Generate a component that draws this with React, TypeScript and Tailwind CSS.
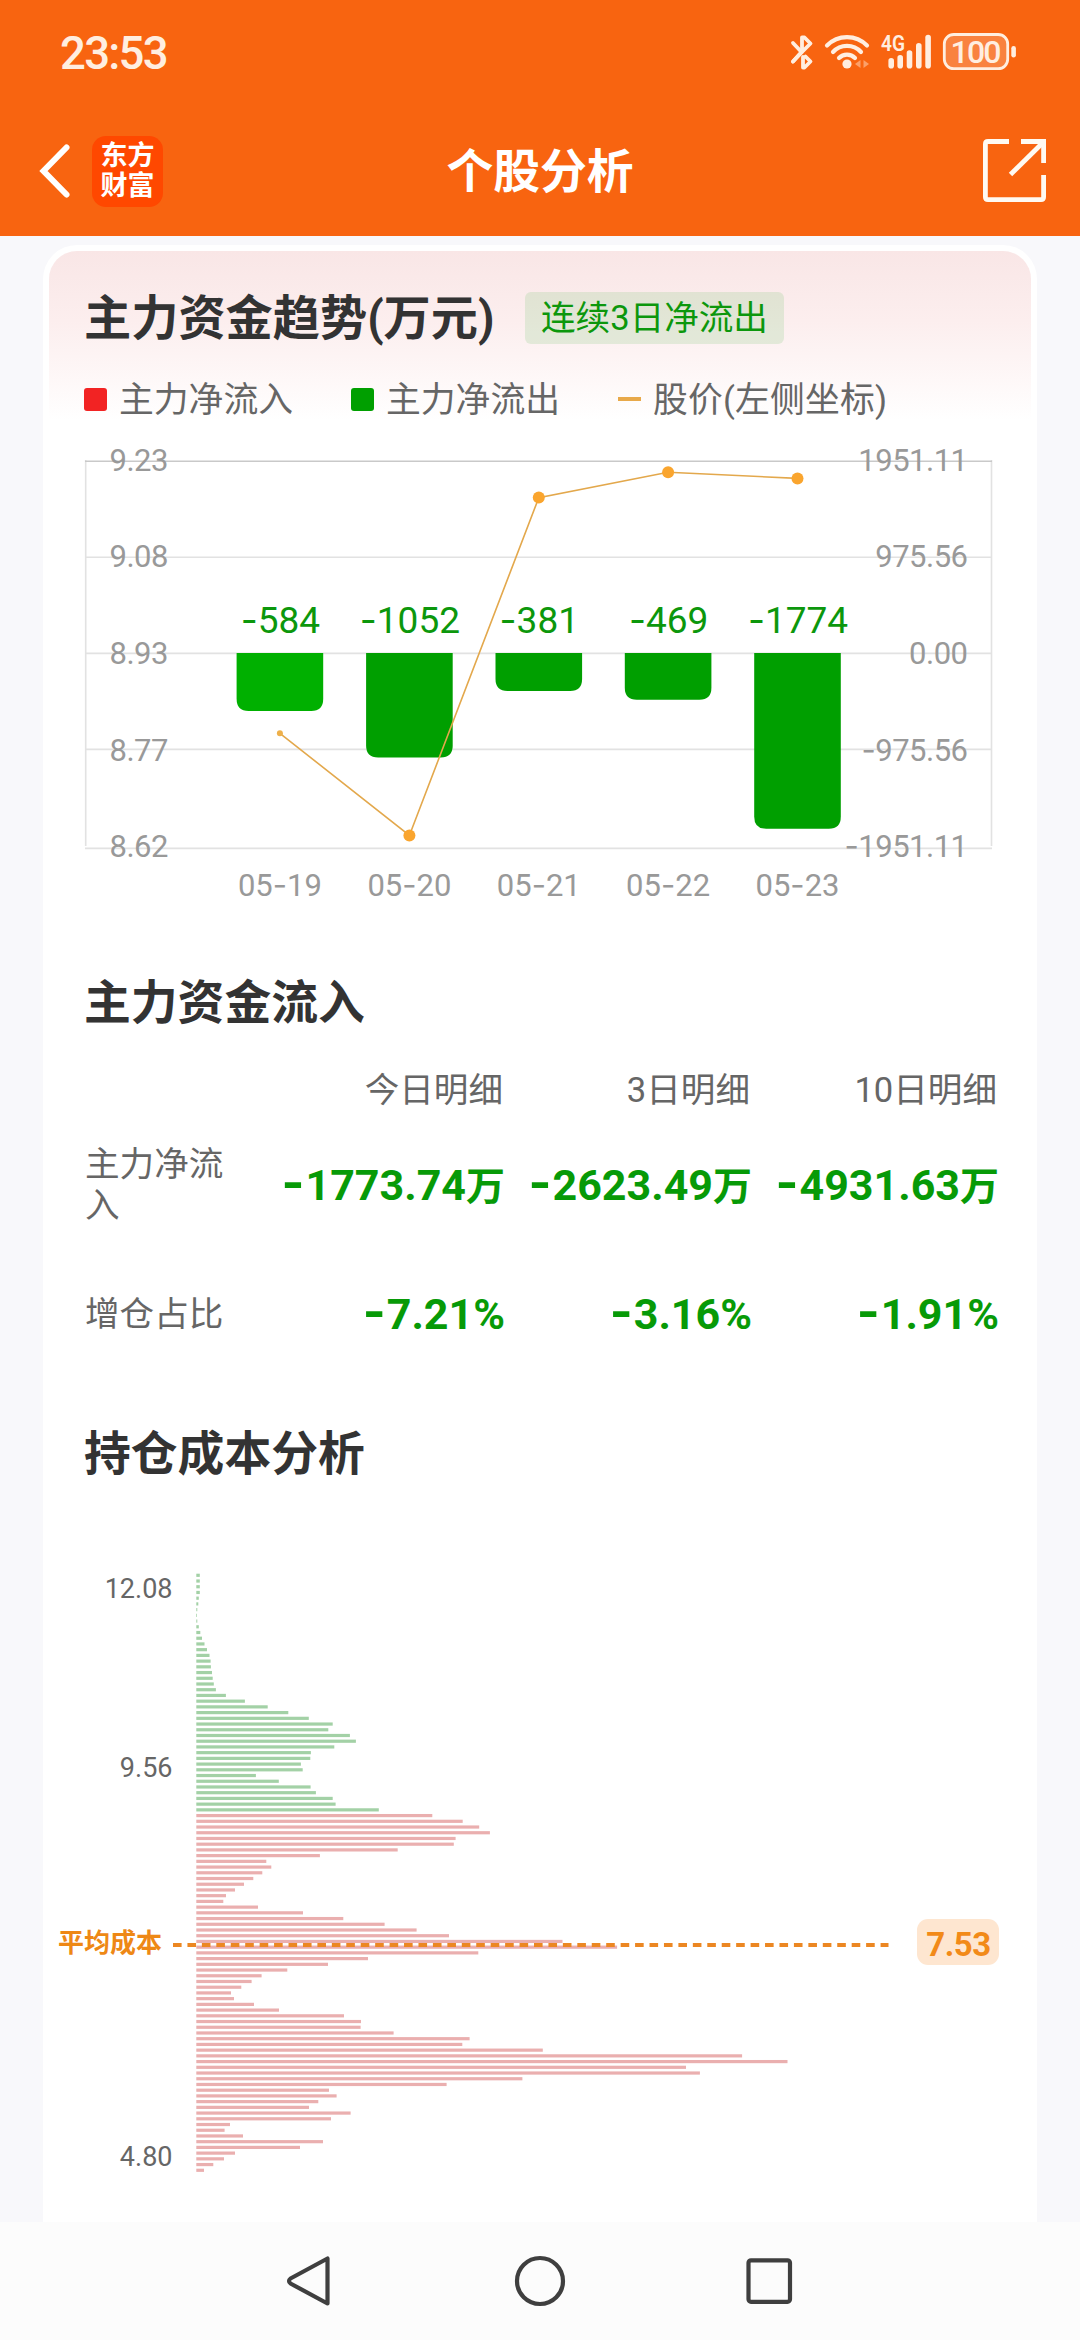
const DAYS = [
    { date: "05-19", value: "584", bottom: 711, x: 279.9, priceY: 733.3 },
    { date: "05-20", value: "1052", bottom: 757.5, x: 409.4, priceY: 835.5 },
    { date: "05-21", value: "381", bottom: 691, x: 538.8, priceY: 497.6 },
    { date: "05-22", value: "469", bottom: 699.8, x: 668.1, priceY: 472.3 },
    { date: "05-23", value: "1774", bottom: 828.7, x: 797.5, priceY: 478.4 },
];

const AXIS = [
    { y: 471, price: "9.23", flow: "1951.11", negative: false },
    { y: 567, price: "9.08", flow: "975.56", negative: false },
    { y: 664, price: "8.93", flow: "0.00", negative: false },
    { y: 761, price: "8.77", flow: "975.56", negative: true },
    { y: 857, price: "8.62", flow: "1951.11", negative: true },
];

// bar lengths from the highest price to the lowest
const COSTS = [
    3.5, 3.5, 3.5, 3.5, 2.5, 2, 1, 0.7, 1, 2.5, 4, 5.7, 8.2, 10.7, 13.2, 14.3, 14.6, 15.7, 16.4, 17.5, 19.6,
    29.6, 48.6, 71.4, 92, 112.5, 136.4, 132, 153.6, 159.6, 138, 114.6, 114, 104.6, 106.4, 59.6, 82.5, 114.3,
    119.6, 136.4, 139.3, 182.5, 236, 266.4, 282.9, 293.6, 259.3, 257.5, 201.4, 123.6, 70, 75, 66, 57, 47.7,
    38.7, 29.7, 27, 61.7, 106.7, 147, 188.3, 220.3, 252.7, 366.2, 420.8, 282, 171.7, 131.7, 91, 65.3, 55.3,
    45, 34.7, 37.7, 57.7, 82.7, 147.7, 164.7, 164.3, 197.3, 273.3, 266, 346.5, 545.8, 591.2, 489.7, 503.6,
    326.1, 250.3, 132.7, 140.3, 122, 112.7, 154.3, 134.7, 33.7, 28.3, 46.7, 126.7, 103.7, 38.7, 27.7, 17, 7.7,
];
const LOSS_COUNT = 42;

const StatusBar = () => {
    return (
        <div className="flex h-[106px] items-center justify-between pl-[60px] pr-[63px] text-[#ffeee0]">
            <span className="pt-0.5 text-[45.5px] font-medium leading-none tracking-[-1.7px]">23:53</span>
            <svg width="230" height="44" viewBox="786 31 230 44" fill="none" stroke="#ffeee0">
                <g strokeWidth="3.8" strokeLinecap="round" strokeLinejoin="round">
                    <path d="M792 43 L800.5 52 L792 61.5" />
                    <path d="M801 52 V37.5 H803.5 L809.5 43.5 L801 52 L792 61.5" />
                    <path d="M802 57 V67.5 H803.5 L809.5 61.5 L804.5 56.5" />
                </g>
                <g strokeWidth="4.2" strokeLinecap="round">
                    <path d="M826 45.5 A28 28 0 0 1 866 45.5" />
                    <path d="M832 52 A19 19 0 0 1 860 52" />
                    <path d="M838 58 A11 11 0 0 1 854 58" />
                </g>
                <circle cx="846" cy="64" r="4.6" fill="#ffeee0" stroke="none" />
                <path d="M859.5 60 V68 L854 64Z M862.5 60 V68 L868 64Z" fill="#fba06a" stroke="none" />
                <text x="880" y="51" fontSize="22.5" fontWeight="600" fill="#ffeee0" stroke="none" textLength="24" lengthAdjust="spacingAndGlyphs">4G</text>
                <g strokeWidth="5.6" strokeLinecap="round">
                    <path d="M890.2 60.8 V65.7" />
                    <path d="M899.2 57.8 V65.7" />
                    <path d="M908.5 53 V65.7" />
                    <path d="M917.8 45.8 V65.7" />
                    <path d="M927.1 37.5 V65.7" />
                </g>
                <rect x="943.3" y="34.5" width="63.4" height="34.2" rx="9.5" strokeWidth="2.8" fill="#f9823f" />
                <rect x="1010.3" y="46" width="4.6" height="11.5" rx="2.3" fill="#ffeee0" stroke="none" />
                <text x="975" y="63" fontSize="32" fontWeight="500" fill="#ffeee0" stroke="none" textAnchor="middle" textLength="51">100</text>
            </svg>
        </div>
    );
};

const Header = () => {
    return (
        <div className="h-[236px] bg-[#f86410]">
            <StatusBar />
            <div className="flex h-[130px] items-center justify-between pl-[38px] pr-[33px]">
                <div className="flex w-[200px] items-center">
                    <svg width="34" height="56" viewBox="0 0 34 56" fill="none" stroke="white" strokeWidth="6">
                        <path d="M28.5 4.5 L5.5 28 L28.5 51.5" strokeLinecap="round" strokeLinejoin="miter" />
                    </svg>
                    <div className="ml-5 flex h-[71px] w-[71px] flex-col items-center justify-center rounded-[14px] bg-[#ff4800] text-[27px] font-bold leading-[30px] text-white">
                        <span>东方</span>
                        <span>财富</span>
                    </div>
                </div>
                <h1 className="pt-0.5 text-[46.8px] font-bold leading-none text-white">个股分析</h1>
                <div className="flex w-[205px] justify-end">
                    <svg width="64" height="64" viewBox="983 139 64 64" fill="none" stroke="#fffaf2" strokeWidth="4.8">
                        <path d="M1009 141.5 H988 Q985.4 141.5 985.4 144 V197 Q985.4 199.7 988 199.7 H1041 Q1043.6 199.7 1043.6 197 V175" />
                        <path d="M1021 141.5 H1043.6 V163" />
                        <path d="M1043 142.5 L1010.5 174.5" />
                    </svg>
                </div>
            </div>
        </div>
    );
};

const Minus = () => <tspan className="font-['Inter']">-</tspan>;

const TrendChart = () => {
    return (
        <svg className="block" width="982" height="502" viewBox="49 419 982 502">
            <g stroke="#e2e2e2" strokeWidth="1.6">
                <path d="M85.7 460 V846 M991.5 460 V846" />
                <path d="M85 557.3 H992 M85 653.4 H992 M85 749.4 H992 M85 848.4 H992" />
                <path d="M85 461.2 H992" stroke="#c9c9c9" />
            </g>
            <g fontSize="31" fill="#999">
                {AXIS.map((a) => (
                    <g key={a.y} letterSpacing="-0.5">
                        <text x="109.5" y={a.y}>{a.price}</text>
                        <text x="967.5" y={a.y} textAnchor="end">
                            {a.negative && <Minus />}{a.flow}
                        </text>
                    </g>
                ))}
            </g>
            {DAYS.map((d, i) => (
                <g key={d.date}>
                    <path
                        d={`M${d.x - 43.3} 653 H${d.x + 43.3} V${d.bottom - 12} q0 12 -12 12 H${d.x - 31.3} q-12 0 -12 -12Z`}
                        fill={i === 0 ? "#00b000" : "#009f00"}
                    />
                    <text x={d.x + 0.5} y="633" fontSize="37" fill="#0c970c" textAnchor="middle"><Minus />{d.value}</text>
                    <text x={d.x} y="896" fontSize="31" fill="#999" textAnchor="middle">
                        {d.date.slice(0, 2)}<Minus />{d.date.slice(3)}
                    </text>
                </g>
            ))}
            <polyline points={DAYS.map((d) => `${d.x},${d.priceY}`).join(" ")} fill="none" stroke="#e3a84c" strokeWidth="1.6" />
            {DAYS.map((d, i) => (
                <circle key={d.date} cx={d.x} cy={d.priceY} r={i === 0 ? 3 : 6} fill={i === 0 ? "#eeb04a" : "#faa52e"} />
            ))}
        </svg>
    );
};

const CostChart = () => {
    return (
        <svg className="block" width="982" height="640" viewBox="49 1560 982 640">
            {COSTS.map((w, i) => (
                <rect key={i} x="196.3" y={1573.7 + i * 5.721} width={w} height="3.2" fill={i < LOSS_COUNT ? "#a3d1a6" : "#eaafaf"} />
            ))}
            <g fontSize="27" fill="#666" textAnchor="end">
                <text x="172.5" y="1598">12.08</text>
                <text x="172.5" y="1777">9.56</text>
                <text x="172.5" y="2166">4.80</text>
            </g>
            <text x="58" y="1952" fontSize="26" fontWeight="700" fill="#ee8815">平均成本</text>
            <path d="M173 1945 H888.5" stroke="#ec8722" strokeWidth="4" strokeDasharray="8.6 5.84" />
            <rect x="917" y="1919" width="82" height="46" rx="11" fill="#fee6d0" />
            <text x="958.5" y="1955.5" fontSize="33" fontWeight="700" fill="#f28a18" textAnchor="middle" letterSpacing="-0.5">7.53</text>
        </svg>
    );
};

const Flow = ({ value, unit }: { value: string; unit: string }) => {
    return (
        <span className="-mr-0.5 whitespace-nowrap text-right text-[43px] font-bold leading-none text-[#079a07]">
            <span className="mr-px font-['Inter'] text-[49px] leading-[0]">-</span>{value}
            <span className={unit === "万" ? "text-[39px]" : ""}>{unit}</span>
        </span>
    );
};

const FlowTable = () => {
    return (
        <div className="ml-9 w-[912px] text-[34.6px] text-[#666]">
            <div className="mt-8 grid h-[50px] grid-cols-[171px_247px_247px_247px] items-center text-right leading-none">
                <span></span>
                <span>今日明细</span>
                <span>3日明细</span>
                <span>10日明细</span>
            </div>
            <div className="mt-7 grid h-[84px] grid-cols-[171px_247px_247px_247px] items-center">
                <span className="w-[140px] leading-[41px]">主力净流入</span>
                <Flow value="1773.74" unit="万" />
                <Flow value="2623.49" unit="万" />
                <Flow value="4931.63" unit="万" />
            </div>
            <div className="mt-[62px] grid h-[50px] grid-cols-[171px_247px_247px_247px] items-center">
                <span className="leading-none">增仓占比</span>
                <Flow value="7.21" unit="%" />
                <Flow value="3.16" unit="%" />
                <Flow value="1.91" unit="%" />
            </div>
        </div>
    );
};

const Legend = () => {
    return (
        <div className="mt-[35px] flex h-10 items-center pl-[35px] text-[34.8px] leading-none text-[#666]">
            <span className="h-[23px] w-[23px] rounded-[3px] bg-[#f22323]"></span>
            <span className="ml-3 w-[232px] pt-0.5">主力净流入</span>
            <span className="h-[23px] w-[23px] rounded-[3px] bg-[#009f00]"></span>
            <span className="ml-3 w-[232px] pt-0.5">主力净流出</span>
            <span className="h-[3.5px] w-[23px] bg-[#e8a94a]"></span>
            <span className="ml-3 pt-0.5 tracking-[0.2px]">股价(左侧坐标)</span>
        </div>
    );
};

const NavBar = () => {
    return (
        <div className="flex h-[118px] justify-center bg-[#fcfcfc]">
            <svg width="520" height="118" viewBox="280 2222 520 118" fill="none" stroke="#3f3f3f" strokeWidth="4.2" strokeLinejoin="round">
                <path d="M327.5 2258.5 V2303.5 L290.5 2283.5 Q287.5 2281 290.5 2278.5Z" />
                <circle cx="540" cy="2281" r="23" />
                <rect x="748.5" y="2260.3" width="41.5" height="41.5" rx="2.5" />
            </svg>
        </div>
    );
};

const App = () => {
    return (
        <div className="flex h-[2340px] w-[1080px] flex-col overflow-hidden bg-[#f8f8fb] font-['Roboto','Noto_Sans_CJK_SC',sans-serif]">
            <Header />
            <div className="mx-[43px] mt-[9px] h-[1977px] overflow-hidden rounded-t-[34px] bg-white p-1.5">
                <div className="rounded-t-[28px] bg-[linear-gradient(#f9e6e6_0px,#fceeee_70px,#fff_170px)] pt-[41px]">
                    <div className="flex h-[52px] items-center pl-[35px]">
                        <h2 className="w-[441px] whitespace-nowrap pt-1 text-[47.2px] font-bold leading-none text-[#333]">主力资金趋势(万元)</h2>
                        <span className="flex h-[52px] w-[259px] items-center justify-center rounded-md bg-[#00a000]/10 text-[34.6px] leading-none text-[#0c970c]">连续3日净流出</span>
                    </div>
                    <Legend />
                </div>
                <TrendChart />
                <h2 className="mt-[52px] pl-[35px] text-[46.8px] font-bold leading-[60px] text-[#333]">主力资金流入</h2>
                <FlowTable />
                <h2 className="mt-[85px] pl-[35px] text-[46.8px] font-bold leading-[60px] text-[#333]">持仓成本分析</h2>
                <div className="mt-[76px]">
                    <CostChart />
                </div>
            </div>
            <NavBar />
        </div>
    );
};

export default App;
